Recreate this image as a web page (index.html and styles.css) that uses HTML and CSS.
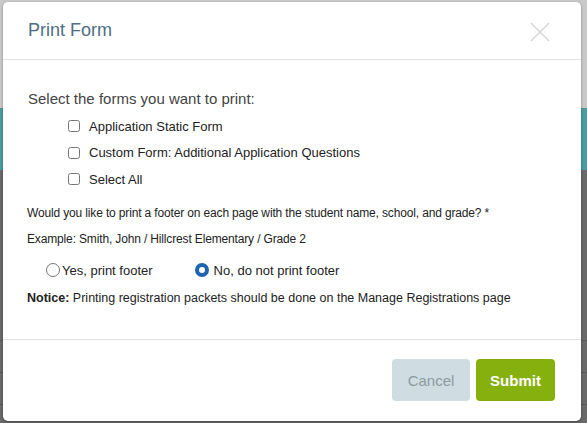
FILE: index.html
```html
<!DOCTYPE html>
<html>
<head>
    <meta charset="utf-8">
    <title>Print Form</title>
    <link rel="stylesheet" href="styles.css">
</head>
<body>
    <div class="page">
        <div class="page-top">
            <div class="page-links">
                <span class="page-btn">Additional Button</span>
                <span class="page-btn second">Welcome to test dropdown</span>
            </div>
        </div>
        <div class="page-band"></div>
        <div class="page-rest">
            <div class="page-row"></div>
            <div class="page-row"></div>
            <div class="page-row"></div>
        </div>
    </div>

    <div class="modal">
        <div class="modal-header">
            <h4 class="modal-title">Print Form</h4>
            <span class="modal-close">
                <svg width="20" height="20" viewBox="0 0 20 20"><path d="M1 1 L19 19 M19 1 L1 19" stroke="#d6d6d6" stroke-width="1.5" fill="none"/></svg>
            </span>
        </div>
        <div class="modal-body">
            <p class="lead">Select the forms you want to print:</p>
            <div class="form-list">
                <label class="check"><input type="checkbox"> Application Static Form</label>
                <label class="check"><input type="checkbox"> Custom Form: Additional Application Questions</label>
                <label class="check"><input type="checkbox"> Select All</label>
            </div>
            <p class="question">Would you like to print a footer on each page with the student name, school, and grade? *</p>
            <p class="question">Example: Smith, John / Hillcrest Elementary / Grade 2</p>
            <div class="radios">
                <label class="radio"><span class="dot"></span>Yes, print footer</label>
                <label class="radio"><span class="dot on"></span>No, do not print footer</label>
            </div>
            <p class="notice"><b>Notice:</b> Printing registration packets should be done on the Manage Registrations page</p>
        </div>
        <div class="modal-footer">
            <button class="btn btn-cancel">Cancel</button>
            <button class="btn btn-submit">Submit</button>
        </div>
    </div>
</body>
</html>
```

FILE: styles.css
```css
*
{
    box-sizing: border-box;
}
body
{
    margin: 0;
    font-family: "Liberation Sans", Arial, sans-serif;
    background: #6b6b6b;
    overflow: hidden;
}
.page-top
{
    height: 108px;
    background: #c9c9c9;
    padding: 0 15px;
    overflow: hidden;
}
.page-links
{
    display: flex;
    gap: 150px;
    margin-top: -19px;
}
.page-btn
{
    font-size: 20px;
    font-weight: bold;
    color: #2a2a2a;
    line-height: 20px;
}
.page-band
{
    height: 62px;
    background: #4b9da2;
}
.page-rest
{
    height: 260px;
    background: #6a6a6a;
    padding-top: 170px;
}
.page-row
{
    height: 32px;
    border-top: 1px solid #5a5a5a;
}

.modal
{
    position: absolute;
    top: 2px;
    left: 3px;
    width: 578px;
    height: 419px;
    background: #fff;
    border-radius: 5px;
    box-shadow: 0 1px 3px rgba(0,0,0,0.35);
}
.modal-header
{
    height: 58px;
    border-bottom: 1px solid #e3e3e3;
    display: flex;
    align-items: center;
    justify-content: space-between;
    padding: 0 31px 0 25px;
}
.modal-title
{
    margin: 0;
    font-size: 18px;
    font-weight: normal;
    color: #4e6e84;
}
.modal-close
{
    display: flex;
    margin-top: 2px;
}
.modal-body
{
    padding: 30px 24px 0 24px;
    height: 280px;
    border-bottom: 1px solid #e3e3e3;
    color: #222;
}
.lead
{
    margin: 0 0 6px 1px;
    font-size: 15px;
    color: #444;
}
.form-list
{
    display: flex;
    flex-direction: column;
    padding-left: 40px;
}
.check
{
    display: flex;
    align-items: center;
    height: 26.5px;
    font-size: 13px;
    color: #222;
}
.check input
{
    width: 12px;
    height: 12px;
    margin: 0 9px 0 1px;
}
.question
{
    margin: 12px 0 0 0;
    font-size: 12px;
    letter-spacing: -0.15px;
    line-height: 16px;
}
.question + .question
{
    margin-top: 10px;
}
.radios
{
    display: flex;
    gap: 42px;
    padding-left: 19px;
    margin-top: 16px;
    font-size: 13px;
}
.radio
{
    display: flex;
    align-items: center;
    gap: 2px;
}
.dot
{
    width: 14px;
    height: 14px;
    border-radius: 50%;
    border: 1px solid #777;
    background: #fff;
}
.dot.on
{
    border: 4.5px solid #1f64b0;
    margin-right: 3px;
}
.notice
{
    margin: 13px 0 0 0;
    font-size: 12.5px;
}
.modal-footer
{
    display: flex;
    justify-content: flex-end;
    gap: 6px;
    padding: 19px 26px 0 0;
}
.btn
{
    height: 42px;
    border: none;
    border-radius: 4px;
    font-family: "Liberation Sans", Arial, sans-serif;
    font-size: 15px;
    padding: 0;
}
.btn-cancel
{
    width: 78px;
    background: #cfdde3;
    color: #8c9aa0;
}
.btn-submit
{
    width: 79px;
    background: #86b00e;
    color: #fff;
    font-weight: bold;
}
```
